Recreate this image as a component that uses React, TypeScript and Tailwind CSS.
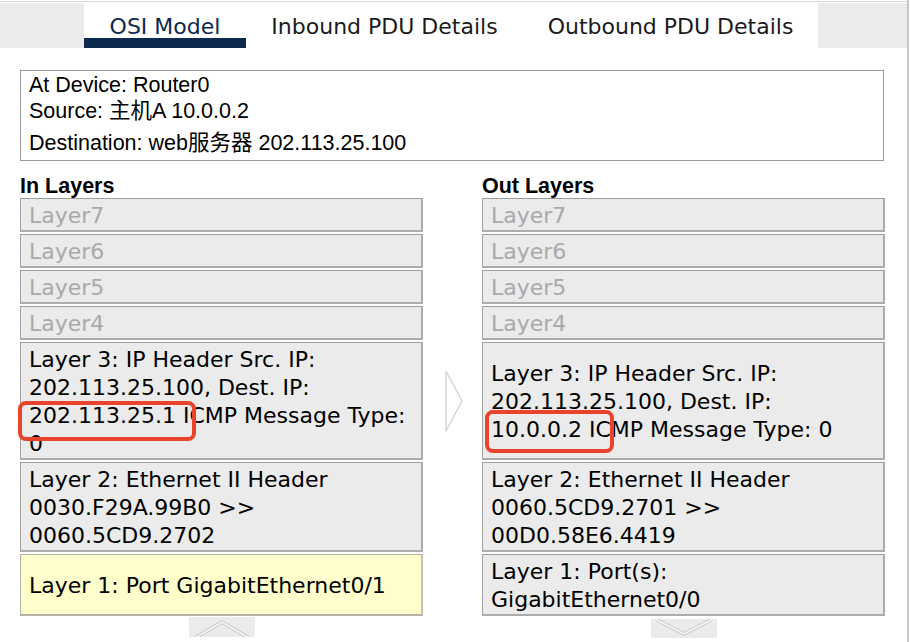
import React from 'react';

type Layer = {
  lines: string[];
  muted?: boolean;
  active?: boolean;
};

const inLayers: Layer[] = [
  { lines: ['Layer7'], muted: true },
  { lines: ['Layer6'], muted: true },
  { lines: ['Layer5'], muted: true },
  { lines: ['Layer4'], muted: true },
  {
    lines: [
      'Layer 3: IP Header Src. IP:',
      '202.113.25.100, Dest. IP:',
      '202.113.25.1 ICMP Message Type:',
      '0',
    ],
  },
  { lines: ['Layer 2: Ethernet II Header', '0030.F29A.99B0 >>', '0060.5CD9.2702'] },
  { lines: ['Layer 1: Port GigabitEthernet0/1'], active: true },
];

const outLayers: Layer[] = [
  { lines: ['Layer7'], muted: true },
  { lines: ['Layer6'], muted: true },
  { lines: ['Layer5'], muted: true },
  { lines: ['Layer4'], muted: true },
  {
    lines: ['Layer 3: IP Header Src. IP:', '202.113.25.100, Dest. IP:', '10.0.0.2 ICMP Message Type: 0'],
  },
  { lines: ['Layer 2: Ethernet II Header', '0060.5CD9.2701 >>', '00D0.58E6.4419'] },
  { lines: ['Layer 1: Port(s):', 'GigabitEthernet0/0'] },
];

const LayerBox: React.FC<{ layer: Layer }> = ({ layer }) => (
  <div
    className={`flex flex-col justify-center pl-[8px] pt-[3px] border-t border-l border-r-2 border-b-2 ${
      layer.active
        ? 'bg-[#ffffcc] border-t-[#b4b4a4] border-l-[#b4b4a4] border-r-[#c4c4b4] border-b-[#b4b4a4]'
        : 'bg-[#ebebeb] border-t-[#9c9c9c] border-l-[#a4a4a4] border-r-[#acacac] border-b-[#acacac]'
    } ${layer.muted ? 'text-[#a9a9a9]' : 'text-black'}`}
  >
    {layer.lines.map((line, i) => (
      <div key={i} className="leading-[28px] whitespace-nowrap">
        {line}
      </div>
    ))}
  </div>
);

const ForwardArrow = () => (
  <svg width="20" height="64" viewBox="0 0 20 64">
    <polygon points="2,2 18,32 2,62" fill="#ffffff" stroke="#d6d6d6" strokeWidth="1.5" strokeLinejoin="round" />
  </svg>
);

const UpArrow = () => (
  <svg width="66" height="20" viewBox="0 0 66 20">
    <rect x="0" y="0" width="66" height="20" fill="#ebebeb" />
    <polyline points="6,21 33,5 60,21" fill="none" stroke="#d0d0d0" strokeWidth="4" />
    <polyline points="6,21 33,5 60,21" fill="none" stroke="#f7f7f7" strokeWidth="1.5" />
  </svg>
);

const DownArrow = () => (
  <svg width="66" height="19" viewBox="0 0 66 19">
    <rect x="0" y="0" width="66" height="19" fill="#ebebeb" />
    <polyline points="6,1 33,15 60,1" fill="none" stroke="#d0d0d0" strokeWidth="4" />
    <polyline points="6,1 33,15 60,1" fill="none" stroke="#f7f7f7" strokeWidth="1.5" />
  </svg>
);

export default function App() {
  return (
    <div className="relative w-[909px] h-[642px] bg-white overflow-hidden border-r-2 border-[#c9c9c9]">
      <div className="mt-[1px] h-[1px] bg-[#d6d6d6]" />

      {/* tabs */}
      <div className="mt-[1px] flex h-[45px] bg-[#ebebeb] font-['DejaVu_Sans',sans-serif] text-[22px]">
        <div className="w-[84px]" />
        <div className="w-[162px] bg-white border-b-[10px] border-[#0c2a50] text-center pt-[9px] leading-[30px] text-[#0c2a50]">
          OSI Model
        </div>
        <div className="w-[277px] bg-white text-center pt-[9px] leading-[30px] text-[#1a1a1a]">
          Inbound PDU Details
        </div>
        <div className="w-[295px] bg-white text-center pt-[9px] leading-[30px] text-[#1a1a1a]">
          Outbound PDU Details
        </div>
        <div className="flex-1" />
      </div>

      <div className="pl-[20px] pt-[22px]">
        {/* device info */}
        <div className="w-[864px] border border-[#9a9a9a] pl-[8px] pt-[1px] pb-[4px] text-[21.5px] text-black font-['Liberation_Sans','Noto_Sans_CJK_SC',sans-serif]">
          <div className="leading-[26px] h-[26px]">At Device: Router0</div>
          <div className="leading-[26px] h-[26px]">Source: 主机A 10.0.0.2</div>
          <div className="mt-[6px] leading-[26px] h-[26px]">Destination: web服务器 202.113.25.100</div>
        </div>

        <div className="mt-[12px] flex h-[25px] leading-[26px] text-[21.5px] font-bold text-black font-['Liberation_Sans',sans-serif]">
          <div className="w-[462px]">In Layers</div>
          <div>Out Layers</div>
        </div>

        {/* layers */}
        <div className="grid grid-cols-[403px_59px_403px] gap-y-[2px] text-[22px] font-['DejaVu_Sans',sans-serif]">
          {inLayers.map((layer, i) => (
            <React.Fragment key={i}>
              <LayerBox layer={layer} />
              <div className="flex items-center pl-[21px]">{i === 4 && <ForwardArrow />}</div>
              <LayerBox layer={outLayers[i]} />
            </React.Fragment>
          ))}
        </div>

        <div className="flex items-start">
          <div className="w-[403px] flex justify-center mt-[1px]">
            <UpArrow />
          </div>
          <div className="w-[59px]" />
          <div className="w-[403px] flex justify-center mt-[3px]">
            <DownArrow />
          </div>
        </div>
      </div>

      {/* highlight annotations */}
      <div className="absolute left-[18px] top-[401px] w-[178px] h-[40px] border-[4px] border-[#e8442c] rounded-[8px]" />
      <div className="absolute left-[485px] top-[410px] w-[129px] h-[43px] border-[4px] border-[#e8442c] rounded-[8px]" />
    </div>
  );
}
